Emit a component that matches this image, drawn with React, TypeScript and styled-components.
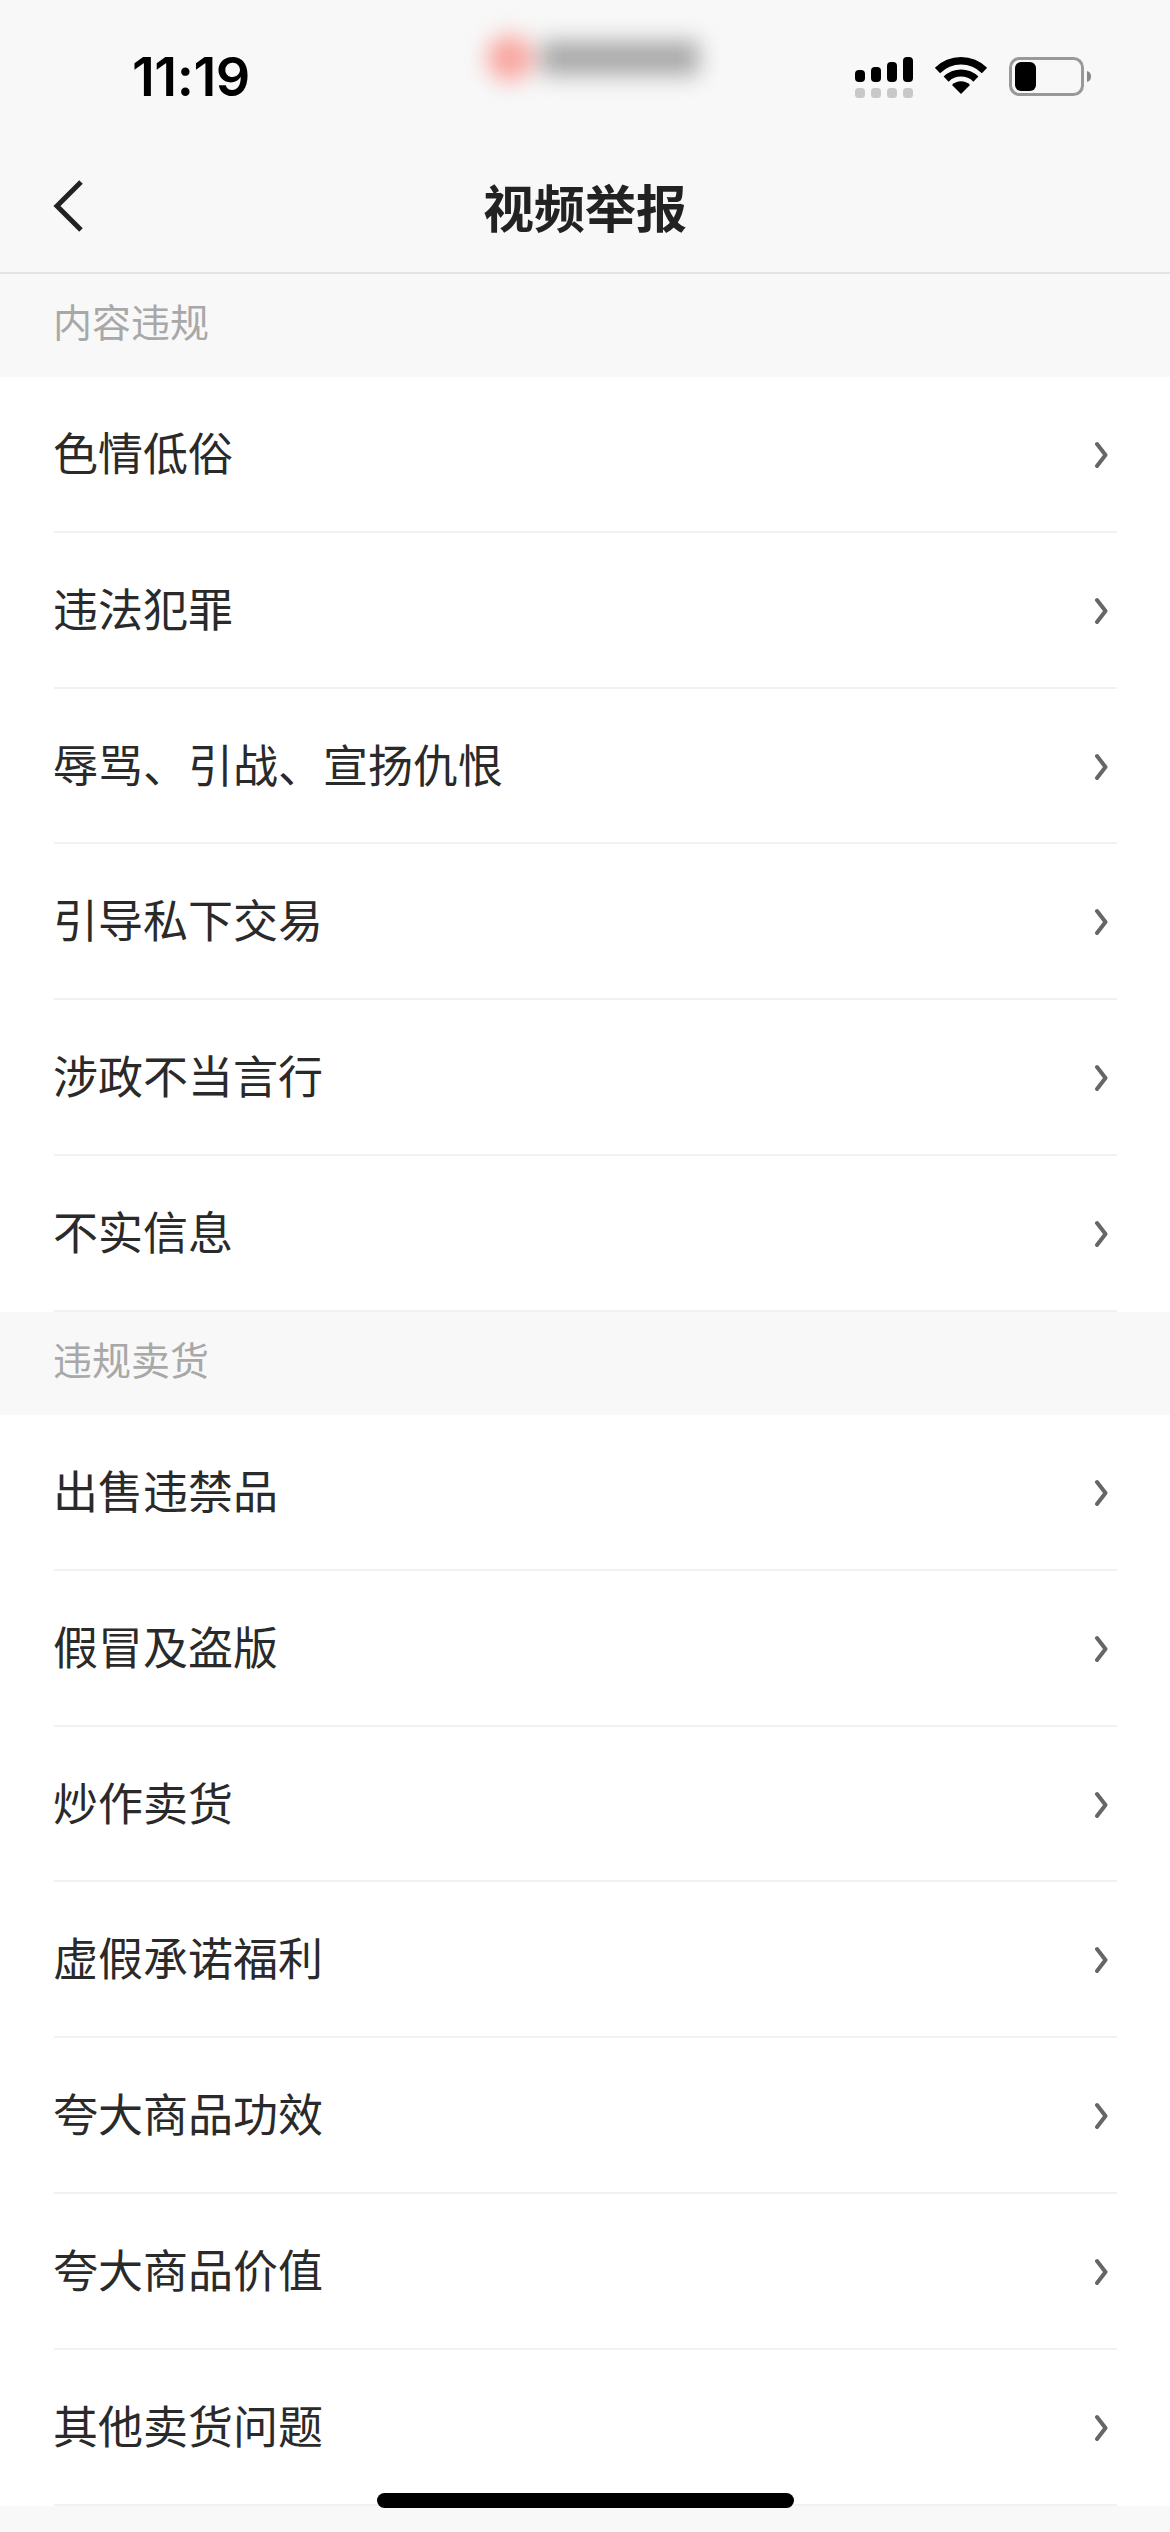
import React from 'react'
import styled, { createGlobalStyle } from 'styled-components'

const contentViolations = [
  '色情低俗',
  '违法犯罪',
  '辱骂、引战、宣扬仇恨',
  '引导私下交易',
  '涉政不当言行',
  '不实信息'
]

const salesViolations = [
  '出售违禁品',
  '假冒及盗版',
  '炒作卖货',
  '虚假承诺福利',
  '夸大商品功效',
  '夸大商品价值',
  '其他卖货问题'
]

function SignalIcon() {
  return (
    <svg width="58" height="41" viewBox="0 0 58 41">
      <rect x="0" y="13" width="10" height="12" rx="4" fill="#000" />
      <rect x="16" y="10" width="10" height="15" rx="4" fill="#000" />
      <rect x="32" y="5" width="10" height="20" rx="4" fill="#000" />
      <rect x="48" y="0" width="10" height="25" rx="4" fill="#000" />
      <rect x="0" y="31" width="10" height="10" rx="3.5" fill="#c8c8c8" />
      <rect x="16" y="31" width="10" height="10" rx="3.5" fill="#c8c8c8" />
      <rect x="32" y="31" width="10" height="10" rx="3.5" fill="#c8c8c8" />
      <rect x="48" y="31" width="10" height="10" rx="3.5" fill="#c8c8c8" />
    </svg>
  )
}

function WifiIcon() {
  return (
    <svg width="52" height="37" viewBox="0 0 52 37" overflow="visible">
      <path
        fill="#000"
        d="M-0.16 10.84A37 37 0 0 1 52.16 10.84L46.86 16.14A29.5 29.5 0 0 0 5.14 16.14Z"
      />
      <path
        fill="#000"
        d="M8.61 19.61A24.6 24.6 0 0 1 43.39 19.61L38.37 24.63A17.5 17.5 0 0 0 13.63 24.63Z"
      />
      <path fill="#000" d="M17.02 28.02A12.7 12.7 0 0 1 34.98 28.02L26 37Z" />
    </svg>
  )
}

function BatteryIcon() {
  return (
    <svg width="82" height="39" viewBox="0 0 82 39">
      <rect
        x="1.5"
        y="1.5"
        width="72"
        height="36"
        rx="9"
        fill="none"
        stroke="#999"
        strokeWidth="3"
      />
      <rect x="6" y="5" width="21" height="29" rx="6" fill="#000" />
      <path d="M78 14a5 5.500 0 0 1 4 5.500a5 5.500 0 0 1-4 5.500z" fill="#888" />
    </svg>
  )
}

function BackIcon() {
  return (
    <svg width="32" height="54" viewBox="0 0 32 54">
      <path d="M29 3L5 27L29 51" fill="none" stroke="#222" strokeWidth="5" />
    </svg>
  )
}

function RowArrow() {
  return (
    <ArrowSvg width="14" height="28" viewBox="0 0 14 28">
      <path
        d="M3 3L11.500 14L3 25"
        fill="none"
        stroke="#666"
        strokeWidth="4"
        strokeLinecap="round"
        strokeLinejoin="round"
      />
    </ArrowSvg>
  )
}

export default function App() {
  return (
    <Page>
      <GlobalStyle />
      <StatusBar>
        <Clock>11:19</Clock>
        <BlurredAccount>
          <BlurredAvatar />
          <BlurredName />
        </BlurredAccount>
        <StatusIcons>
          <SignalIcon />
          <WifiIcon />
          <BatteryIcon />
        </StatusIcons>
      </StatusBar>
      <NavBar>
        <BackButton>
          <BackIcon />
        </BackButton>
        <Title>视频举报</Title>
      </NavBar>
      <SectionLabel>内容违规</SectionLabel>
      <ReportList>
        {contentViolations.map(item => (
          <ReportRow key={item}>
            <RowInner>
              <RowText>{item}</RowText>
              <RowArrow />
            </RowInner>
          </ReportRow>
        ))}
      </ReportList>
      <SectionLabel>违规卖货</SectionLabel>
      <ReportList>
        {salesViolations.map(item => (
          <ReportRow key={item}>
            <RowInner>
              <RowText>{item}</RowText>
              <RowArrow />
            </RowInner>
          </ReportRow>
        ))}
      </ReportList>
      <HomeIndicator />
    </Page>
  )
}

const GlobalStyle = createGlobalStyle`
  html,
  body {
    margin: 0;
    padding: 0;
    background: #f8f8f8;
  }
`

const Page = styled.div`
  position: relative;

  width: 1170px;
  height: 2532px;
  overflow: hidden;

  background: #f8f8f8;

  font-family: 'Noto Sans CJK SC', 'Liberation Sans', sans-serif;
`

const StatusBar = styled.div`
  display: flex;
  align-items: flex-start;

  box-sizing: border-box;
  height: 140px;
  padding: 30px 79px 0 132px;
`

const Clock = styled.div`
  width: 118px;
  margin-top: 17px;

  font-family: Inter, 'Liberation Sans', sans-serif;
  font-size: 54px;
  font-weight: 600;
  line-height: 60px;
  letter-spacing: -0.5px;
  white-space: nowrap;
  color: #000;
`

const BlurredAccount = styled.div`
  display: flex;
  align-items: center;
  gap: 8px;

  margin: 5px 0 0 237px;

  filter: blur(11px);
`

const BlurredAvatar = styled.div`
  width: 46px;
  height: 46px;

  border-radius: 50%;
  background: #f9a59f;
`

const BlurredName = styled.div`
  width: 158px;
  height: 34px;

  background: #a8a8a8;
`

const StatusIcons = styled.div`
  display: flex;
  align-items: flex-start;
  gap: 22px;

  margin: 27px 0 0 auto;

  svg {
    display: block;
  }
`

const NavBar = styled.div`
  display: grid;
  grid-template-columns: 1fr auto 1fr;
  align-items: center;

  box-sizing: border-box;
  height: 134px;
  padding: 0 52px;

  border-bottom: 2px solid #e4e4e4;
`

const BackButton = styled.div`
  display: flex;
`

const Title = styled.h1`
  margin: 0;

  font-size: 51px;
  font-weight: 700;
  line-height: 60px;
  color: #222;
`

const SectionLabel = styled.div`
  display: flex;
  align-items: center;

  box-sizing: border-box;
  height: 103px;
  padding: 0 0 11px 53px;

  font-size: 39px;
  font-weight: 400;
  color: #a8a8a8;
`

const ReportList = styled.div`
  background: #fff;
`

const ReportRow = styled.div`
  height: 155.83px;
  padding: 0 53px 0 54px;
`

const RowInner = styled.div`
  display: flex;
  align-items: center;
  justify-content: space-between;

  box-sizing: border-box;
  height: 100%;
  padding-right: 9px;

  border-bottom: 2px solid #f1f1f1;
`

const RowText = styled.span`
  margin: 0 0 5px -1px;

  font-size: 45px;
  font-weight: 400;
  color: #2a2a2a;
`

const ArrowSvg = styled.svg`
  margin-top: 2px;
`

const HomeIndicator = styled.div`
  position: absolute;
  left: 377px;
  top: 2493px;

  width: 417px;
  height: 15px;

  border-radius: 8px;
  background: #000;
`
